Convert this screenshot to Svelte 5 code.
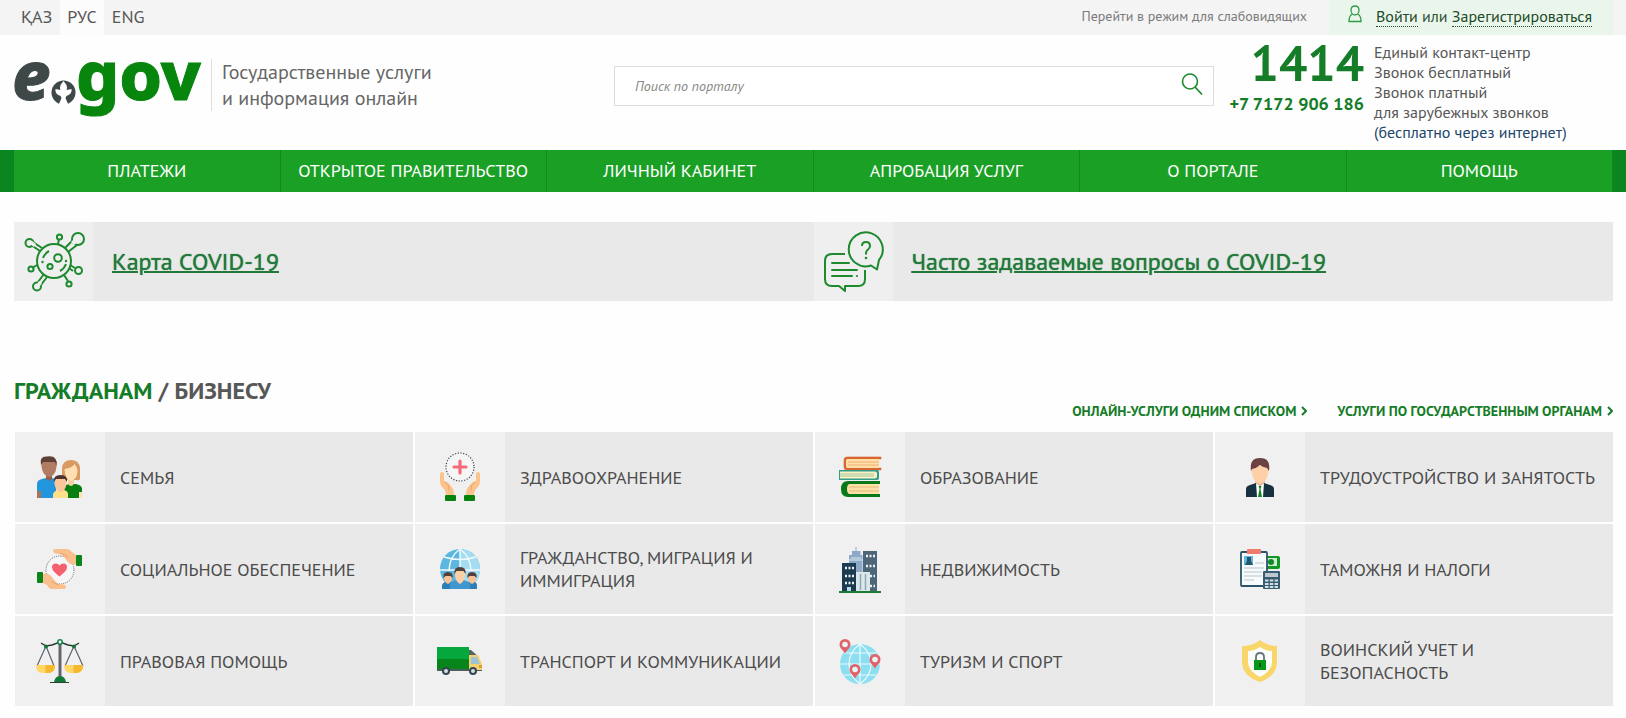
<script>
  let query = $state("");
  let lang = $state("РУС");

  const langs = ["ҚАЗ", "РУС", "ENG"];

  const menu = [
    "Платежи",
    "Открытое правительство",
    "Личный кабинет",
    "Апробация услуг",
    "О портале",
    "Помощь",
  ];

  const services = [
    { icon: "family", title: "Семья" },
    { icon: "health", title: "Здравоохранение" },
    { icon: "books", title: "Образование" },
    { icon: "worker", title: "Трудоустройство и занятость" },
    { icon: "social", title: "Социальное обеспечение" },
    { icon: "migration", title: "Гражданство, миграция и иммиграция" },
    { icon: "city", title: "Недвижимость" },
    { icon: "customs", title: "Таможня и налоги" },
    { icon: "law", title: "Правовая помощь" },
    { icon: "truck", title: "Транспорт и коммуникации" },
    { icon: "tourism", title: "Туризм и спорт" },
    { icon: "shield", title: "Воинский учет и безопасность" },
  ];
</script>

{#snippet pin(x, y)}
  <path
    transform="translate({x} {y})"
    d="M0 8.500C-2 5-5.500 3-5.500-.500a5.500 5.500 0 0 1 11 0C5.500 3 2 5 0 8.500z"
    fill="#e2626a"
  />
  <circle cx={x} cy={y - 0.5} r="2.800" fill="#e8f6f8" />
{/snippet}

{#snippet chevron()}
  <svg class="chevron" viewBox="0 0 6 10" aria-hidden="true">
    <path d="M1 1l4 4-4 4" fill="none" stroke="#1a7a2e" stroke-width="2" />
  </svg>
{/snippet}

{#snippet picture(name)}
  <svg class="picture" viewBox="0 0 48 48" aria-hidden="true">
    {#if name === "family"}
      <path d="M1 45V31q0-4 5-5l4-1h6l4 1v19z" fill="#2196dd" />
      <path d="M1 38h4v7H1z" fill="#a9745a" />
      <path d="M10 20h6v6q-3 3-6 0z" fill="#966149" />
      <path d="M5.500 8h15v6q-1 9-7.500 10Q7 23 5.500 14z" fill="#b07d63" />
      <path d="M5 12Q3 3 11 3.500 22 2 20.500 13L19 9H7z" fill="#5d4037" />
      <path d="M26 26V15q1-8 9-8t9 8v11q-1 2-4 1H28z" fill="#d99a63" />
      <path d="M27 45V35q1-3 6-4h7q5 1 6 4v10z" fill="#087d12" />
      <path d="M32 26h6v5q-3 4-6 0z" fill="#f5cfa0" />
      <path d="M28.500 16q8-1 10-5 3 3 3 8-1 8-6.500 9-6-1-6.500-12z" fill="#ffe0b2" />
      <path d="M43 39h3v6h-3z" fill="#ffe0b2" />
      <path d="M17 45v-4q1-3 5-4h6q4 1 4 4v4z" fill="#ffe08a" />
      <path d="M18.500 26h12v5q-1 7-6 8-5-1-6-8z" fill="#f9c79b" />
      <path d="M18 29q-1-7 6.500-7T31 29l-2-3h-9z" fill="#4e342e" />
    {:else if name === "health"}
      <circle cx="24" cy="14" r="14" fill="#f6f6f6" stroke="#3c4650" stroke-width="1.200" stroke-dasharray="1.200 1.550" />
      <path d="M24 8v12M18 14h12" stroke="#f56b78" stroke-width="3.200" stroke-linecap="round" />
      <path d="M4 21q0-2 2-2t2 2v7q3 0 7 5 3 3 3 9h-8q0-5-4-8-2-2-2-6z" fill="#fbc28a" />
      <path d="M44 21q0-2-2-2t-2 2v7q-3 0-7 5-3 3-3 9h8q0-5 4-8 2-2 2-6z" fill="#fbc28a" />
      <path d="M9 29q5 3 4 8M39 29q-5 3-4 8" fill="none" stroke="#e9a46c" />
      <rect x="9" y="42" width="11" height="6" rx="1" fill="#07820f" />
      <rect x="28" y="42" width="11" height="6" rx="1" fill="#07820f" />
    {:else if name === "books"}
      <path d="M45 4H11q-3 0-3 3v7q0 3 3 3h34v-2H12V6h33z" fill="#d9662f" stroke="#d9662f" stroke-width=".6" />
      <path d="M11 6h32v9H11q-1 0-1-2V8q0-2 1-2z" fill="#ffdfa8" />
      <path d="M12 9h31M12 12h31" stroke="#f3ad79" />
      <path d="M3 17h38q2 0 2 2v6q0 2-2 2H3z" fill="#2f9c8d" />
      <path d="M4 18.500h35q2 0 2 2v3q0 2-2 2H4z" fill="#fff0c4" />
      <path d="M4 21h34M4 23h34" stroke="#9fc9a1" />
      <path d="M44 28H12q-7 0-7 8t7 8h32v-3H13v-10h31z" fill="#08791a" />
      <path d="M14 31h29v10H14q-3 0-3-5t3-5z" fill="#f9e2a6" />
      <path d="M13 34h30M13 38h30" stroke="#e9b87d" />
    {:else if name === "worker"}
      <path d="M19 24h10v8l-5 5-5-5z" fill="#f2b792" />
      <path d="M15.500 13h17v5q-1 11-8.500 13-7.500-2-8.500-13z" fill="#ffd0a8" />
      <path d="M15 18Q13 5 24 5t9 13l-2-3q-5-1-7-3-3 3-8 4z" fill="#6b4142" />
      <path d="M10 44V36q0-3 4-4l6-2 4 3 4-3 6 2q4 1 4 4v8z" fill="#17303f" />
      <path d="M20 30l4 3 4-3-1 14h-6z" fill="#fff" />
      <path d="M22.500 33h3l-1 3 1.500 8h-4l1.500-8z" fill="#0b8a1a" />
    {:else if name === "social"}
      <circle cx="24" cy="25" r="14" fill="#f6f6f6" stroke="#56606a" stroke-width="1" stroke-dasharray="1 1.200" />
      <path d="M23.500 31.500C18 27 16 25 16 22q0-3.500 4-3.500 2 0 3.500 2 1.500-2 4-2 3.500 0 3.500 3.500c0 3-2 5-7.500 9.500z" fill="#f4606d" />
      <path d="M17 6q0-2 3-2h11q3 0 5 3l4 3v9q-5 2-9-3-4-6-7-7-7 0-7-3z" fill="#f9c08d" />
      <path d="M30 42q0 2-3 2H16q-3 0-5-4l-4-2v-9q5-2 9 3 4 6 7 7 7 0 7 3z" fill="#f9c08d" />
      <path d="M24 8q4 1 8 4M23 40q-4-1-8-4" fill="none" stroke="#eaa26c" />
      <rect x="40" y="10" width="6" height="11" rx="1" fill="#0b8419" />
      <rect x="1" y="27" width="6" height="11" rx="1" fill="#0b8419" />
    {:else if name === "migration"}
      <circle cx="24" cy="24" r="20" fill="#5cb7e0" />
      <path d="M24 4a20 20 0 0 1 20 20q0 11-8 17H24z" fill="#a4dcf1" />
      <path d="M24 4q-11 8-11 22M24 4q11 8 11 22M24 4v38M4 25h40M8 12q16 5 32 0" fill="none" stroke="#eff9fc" stroke-width="1.500" />
      <path d="M6 44v-4q1-3 6-4 5 1 7 4v4zM29 44v-4q2-3 7-4 5 1 5 4v4z" fill="#2c7fb8" />
      <path d="M14 44v-5q1-3 7-4h6q6 1 7 4v5z" fill="#3f97cf" />
      <path d="M8 30h8v4q-1 4-4 5-3-1-4-5zM32 30h8v4q-1 4-4 5-3-1-4-5z" fill="#f5c197" />
      <path d="M7.500 33q-1-6 4.500-6t4.500 6l-2-2h-5zM31.500 33q-1-6 4.500-6t4.500 6l-2-2h-5z" fill="#51403b" />
      <path d="M19 26h10v5q-1 6-5 8-4-2-5-8z" fill="#fccfa4" />
      <path d="M18.500 29q-1-7 5.500-7t5.500 7l-2-3h-7z" fill="#51403b" />
    {:else if name === "city"}
      <path d="M19.500 2h1v4h4v4h2v36H13V10h3V6h3.500z" fill="#8da9c7" />
      <path d="M13 15h14M15 13h10" stroke="#dce8f1" />
      <rect x="27" y="6" width="14" height="40" fill="#4c6577" />
      <path d="M30 11h9M30 21h9M34 31h5M34 41h5" stroke="#e9f2f8" stroke-width="2.500" stroke-dasharray="2 1.500" />
      <rect x="6" y="18" width="14" height="28" fill="#1d3b4f" />
      <path d="M9 23h9M9 31h9M9 38h9" stroke="#e9f2f8" stroke-width="2.500" stroke-dasharray="2 1.500" />
      <path d="M11 42h4v4h-4z" fill="#b5dcf0" />
      <rect x="20" y="27" width="14" height="19" fill="#dce7ec" />
      <path d="M24.500 29v16M29.500 29v16" stroke="#8fa6b3" stroke-width="1.500" />
      <path d="M3 46h42v2H3z" fill="#1b7a33" />
    {:else if name === "customs"}
      <path d="M29 11h13q2 0 2 2v9q0 2-2 2H29z" fill="#0f9824" />
      <path d="M30 13h11v8H30z" fill="#cdeccf" />
      <circle cx="35" cy="17" r="3" fill="#11892a" />
      <rect x="5" y="7" width="26" height="34" rx="1" fill="#f7fafb" stroke="#2c536c" stroke-width="1.800" />
      <rect x="11" y="4" width="14" height="5" rx="1" fill="#f07c6c" />
      <path d="M8 11h9v9H8z" fill="#62b8dc" />
      <path d="M11 12h4v4l2 4H9l2-4z" fill="#24556e" />
      <path d="M19 18h9M8 23h20M8 27h18M8 31h18M8 35h10" stroke="#b7c5cc" />
      <rect x="27" y="26" width="17" height="18" rx="1" fill="#385d73" />
      <path d="M29 28h13v4H29z" fill="#bec9cf" />
      <path d="M29 35.500h13M29 39h13M29 42h13" stroke="#d4e0e6" stroke-width="2" stroke-dasharray="3.500 1.300" />
    {:else if name === "law"}
      <path d="M22.500 6h3v36h-3z" fill="#66646f" />
      <path d="M5 6l5 3 6-1 8-3 8 3 6 1 5-3" fill="none" stroke="#2b3437" stroke-width="1.400" />
      <path d="M10 9L1 29M10 9l8 20M38 9l-9 20M38 9l9 20" stroke="#5d6570" stroke-width="1.200" />
      <circle cx="24" cy="5" r="2.200" fill="#fff" stroke="#11884a" stroke-width="1.600" />
      <circle cx="10" cy="9.500" r="2" fill="#11753a" />
      <circle cx="38" cy="9.500" r="2" fill="#11753a" />
      <path d="M0 28h19q0 8-7 8H7q-7 0-7-8z" fill="#ffd766" />
      <path d="M9.500 28H19q0 8-7 8H9.500z" fill="#f5b82e" />
      <path d="M28 28h19q0 8-7 8h-5q-7 0-7-8z" fill="#ffd766" />
      <path d="M37.500 28H47q0 8-7 8h-2.500z" fill="#f5b82e" />
      <path d="M18 45q1-6 6-6t6 6z" fill="#0f7a35" />
      <path d="M14 45.500h19" stroke="#2b4034" />
    {:else if name === "truck"}
      <path d="M1 10h32v12H1z" fill="#05a83c" />
      <path d="M1 22h32v10H1z" fill="#07841a" />
      <path d="M1 32h45v2H1z" fill="#48605a" />
      <path d="M33 13h2l8 7H33z" fill="#56655b" />
      <path d="M33 18h9l4 9v6H33z" fill="#f3d071" />
      <path d="M35 20h6l3 7h-9z" fill="#9cc3d6" />
      <path d="M43 28h3v3h-3z" fill="#df9a3c" />
      <circle cx="10" cy="34" r="4" fill="#34464f" />
      <circle cx="10" cy="34" r="2" fill="#d5dee2" />
      <circle cx="37" cy="34" r="4" fill="#34464f" />
      <circle cx="37" cy="34" r="2" fill="#d5dee2" />
    {:else if name === "tourism"}
      <circle cx="24" cy="27" r="20" fill="#8cdff0" />
      <path d="M24 7v40M24 7q-11 8-11 20t11 20M24 7q11 8 11 20T24 47M4 27h40M8 16h32M8 38h32" fill="none" stroke="#eefafc" stroke-width="1.200" />
      {@render pin(9, 8)}
      {@render pin(39, 23)}
      {@render pin(19, 33)}
    {:else if name === "shield"}
      <path d="M24 3q7 6 17 6v16q0 14-17 20Q6 39 6 25V9q11 0 18-6z" fill="#f8d669" />
      <path d="M24 10q6 4 12 4v11q0 9-12 15-12-6-12-15V14q6 0 12-4z" fill="#fbfdfb" />
      <path d="M20 24v-4q0-4 4-4t4 4v4" fill="none" stroke="#68747b" stroke-width="1.800" />
      <path d="M18 23h12v10H18z" fill="#079819" />
      <path d="M24 26v4" stroke="#07590f" stroke-width="2" />
    {/if}
  </svg>
{/snippet}

<div class="topbar">
  <div class="wrap topbar-inner">
    <div class="langs">
      {#each langs as item}
        <button class="lang" class:active={item === lang} onclick={() => (lang = item)}>{item}</button>
      {/each}
    </div>
    <a class="vision" href="#vision">Перейти в режим для слабовидящих</a>
    <div class="login">
      <svg class="user" viewBox="0 0 14 18" aria-hidden="true">
        <path
          d="M7 1C4.500 1 3 2.500 3 5s1.500 5 4 5 4-2.500 4-5-1.500-4-4-4zM4.500 9C2 10 1 12 1 16.500h12C13 12 12 10 9.500 9"
          fill="none"
          stroke="#2f9a45"
          stroke-width="1.300"
        />
      </svg>
      <span><a href="#login">Войти</a> или <a href="#register">Зарегистрироваться</a></span>
    </div>
  </div>
</div>

<header class="wrap header">
  <a class="brand" href="#home">
    <svg class="logo" viewBox="0 0 190 76" role="img" aria-label="e.gov">
      <text class="logo-e" x="-2" y="58">e</text>
      <text class="logo-gov" x="62" y="58">gov</text>
      <circle cx="49.500" cy="50.500" r="12" fill="#3f4848" />
      <path
        d="M49.500 39l3 4q1 3 0 5l5-1q1 5-5 7l-1 2 3 7h-10l3-7-1-2q-6-2-5-7l5 1q-1-2 0-5z"
        fill="#fff"
      />
    </svg>
    <span class="slogan">Государственные услуги<br />и информация онлайн</span>
  </a>

  <form class="search" onsubmit={(e) => e.preventDefault()}>
    <input type="search" aria-label="Поиск по порталу" placeholder="Поиск по порталу" bind:value={query} />
    <button type="submit" aria-label="Найти">
      <svg viewBox="0 0 22 24" aria-hidden="true">
        <circle cx="9" cy="9.500" r="7.500" fill="none" stroke="#1a8a2e" stroke-width="1.600" />
        <path d="M14 15l7 7.500" stroke="#1a8a2e" stroke-width="1.800" />
      </svg>
    </button>
  </form>

  <div class="phones">
    <div class="short">1414</div>
    <div class="long">+7 7172 906 186</div>
  </div>
  <div class="contacts">
    Единый контакт-центр<br />
    Звонок бесплатный<br />
    Звонок платный<br />
    для зарубежных звонков<br />
    <a href="#call">(бесплатно через интернет)</a>
  </div>
</header>

<nav class="nav">
  <div class="wrap menu">
    {#each menu as item}
      <a href="#menu">{item}</a>
    {/each}
  </div>
</nav>

<main class="wrap">
  <div class="covid">
    <div class="covid-item">
      <svg viewBox="0 0 79 79" aria-hidden="true">
        <g fill="none" stroke="#1d8a2e" stroke-width="2">
          <circle cx="40" cy="39" r="17" />
          <path d="M26 29L17 23M28 26l-9-6M51 26l8-8M54 30l9-7M33 55l-6 8M30 52l-6 8M44 22l1-5M23 43l-5 3M56 43l5 3M55 46l4 3M50 53l4 6" />
          <circle cx="15.500" cy="21" r="4" />
          <circle cx="64" cy="17" r="6" />
          <circle cx="23" cy="64.500" r="4" />
          <circle cx="45.500" cy="15" r="2.600" />
          <circle cx="17" cy="47" r="2.600" />
          <circle cx="64.500" cy="48.500" r="3.500" />
          <circle cx="55" cy="62" r="2.600" />
          <circle cx="44" cy="36" r="3.800" />
          <circle cx="36" cy="44.500" r="2.600" />
          <path d="M29 36q2-5 6-7M52 42q-2 5-6 7" />
        </g>
        <path d="M18 19l4 3-2 3-4-3zM60 17l3 4-3 2-3-3zM25 59l3 2-2 3-3-2z" fill="#efefef" />
        <circle cx="28.500" cy="40" r="1.200" fill="#1d8a2e" />
        <circle cx="52" cy="39" r="1.200" fill="#1d8a2e" />
      </svg>
      <a href="#map">Карта COVID-19</a>
    </div>
    <div class="covid-item">
      <svg viewBox="0 0 79 79" aria-hidden="true">
        <g fill="none" stroke="#1d8a2e" stroke-width="2" stroke-linejoin="round">
          <path d="M57 43.500A17 17 0 1 1 65 38l-2 9.500z" />
          <path d="M31 32H18q-7 0-7 7v18q0 7 7 7h7l6 5v-5h13q7 0 7-7V48" />
          <path d="M18 41h17M18 48h25M18 54h20" stroke-linecap="round" />
          <path d="M48 24q0-4 4-4t4 4q0 2-2 3.500T52 31v1.500" />
        </g>
        <circle cx="52" cy="36" r="1.300" fill="#1d8a2e" />
        <circle cx="43" cy="54" r="1.100" fill="#1d8a2e" />
      </svg>
      <a href="#faq">Часто задаваемые вопросы о COVID-19</a>
    </div>
  </div>

  <div class="section-head">
    <h2><a class="current" href="#citizens">Гражданам</a> / <a href="#business">Бизнесу</a></h2>
    <div class="more">
      <a href="#list">Онлайн-услуги одним списком{@render chevron()}</a>
      <a href="#organs">Услуги по государственным органам{@render chevron()}</a>
    </div>
  </div>

  <div class="services">
    {#each services as item}
      <a class="service" href="#service">
        <span class="service-icon">{@render picture(item.icon)}</span>
        <span class="service-title">{item.title}</span>
      </a>
    {/each}
  </div>
</main>

<style>
  :global(body) {
    background: #fefefe;
    color: #575757;
    font-family: "PT Sans", Roboto, "Noto Sans", sans-serif;
    font-size: 16px;
  }

  a {
    color: inherit;
    text-decoration: none;
  }

  button {
    border: 0;
    padding: 0;
    background: none;
    color: inherit;
    font: inherit;
    cursor: pointer;
  }

  .wrap {
    max-width: 1599px;
    margin: 0 auto;
    padding: 0 13px 0 14px;
  }

  .topbar {
    background: #f4f4f4;
  }

  .topbar-inner {
    display: flex;
    height: 35px;
  }

  .langs {
    display: flex;
    flex: 1;
    gap: 1px;
  }

  .lang {
    padding: 0 7px 2px;
    font-size: 18px;
  }

  .lang.active {
    background: #fcfcfc;
  }

  .vision {
    padding-right: 22px;
    color: #7b7b7b;
    font-size: 14px;
    line-height: 33px;
  }

  .login {
    box-sizing: border-box;
    display: flex;
    width: 284px;
    padding-left: 19px;
    gap: 14px;
    background: #eaf6eb;
    color: #2f5238;
    font-size: 16px;
    line-height: 33px;
  }

  .login a {
    border-bottom: 1px dotted #1d4a28;
    color: #1d4a28;
  }

  .user {
    width: 14px;
    height: 18px;
    margin-top: 5px;
  }

  .header {
    display: grid;
    grid-template-columns: 1fr 600px 150px 249px;
    padding-top: 7px;
    padding-bottom: 8px;
  }

  .brand {
    display: flex;
    align-items: flex-start;
  }

  .logo {
    width: 190px;
    height: 76px;
    overflow: visible;
  }

  .logo-e,
  .logo-gov {
    font-family: "Noto Sans", sans-serif;
    font-size: 68px;
    font-weight: 800;
  }

  .logo-e {
    fill: #3f4848;
    stroke: #3f4848;
    font-style: italic;
  }

  .logo-gov {
    fill: #07850d;
    stroke: #07850d;
  }

  .slogan {
    margin: 17px 0 0 7px;
    padding-left: 10px;
    border-left: 1px solid #dedede;
    color: #666;
    font-size: 20px;
    line-height: 26px;
  }

  .search {
    box-sizing: border-box;
    display: flex;
    height: 40px;
    margin-top: 24px;
    border: 1px solid #ddd;
    background: #fff;
  }

  .search input {
    flex: 1;
    min-width: 0;
    padding: 0 20px;
    border: 0;
    background: none;
    font: italic 14px "PT Sans", Roboto, "Noto Sans", sans-serif;
  }

  .search input::placeholder {
    color: #888;
  }

  .search button {
    width: 42px;
  }

  .search svg {
    width: 22px;
    height: 24px;
  }

  .phones {
    display: flex;
    flex-direction: column;
    align-items: flex-end;
    color: #157c28;
    font-weight: 700;
  }

  .short {
    font-size: 50px;
    line-height: 41px;
  }

  .long {
    font-size: 18px;
    line-height: 41px;
    white-space: nowrap;
  }

  .contacts {
    padding-left: 10px;
    font-size: 16px;
    line-height: 20px;
  }

  .contacts a {
    color: #22456a;
  }

  .nav {
    background: #0a8520;
  }

  .menu {
    display: grid;
    grid-template-columns: repeat(6, 1fr);
  }

  .menu a {
    border-right: 1px solid #128a1e;
    background: #1ba026;
    color: #fff;
    font-size: 18px;
    line-height: 42px;
    text-align: center;
    text-transform: uppercase;
  }

  .covid {
    display: grid;
    grid-template-columns: 1fr 1fr;
    margin-top: 30px;
    background: #e9e9e9;
  }

  .covid-item {
    display: flex;
    align-items: center;
    gap: 19px;
    color: #24793a;
    font-size: 24px;
  }

  .covid-item a {
    text-decoration: underline;
    text-decoration-thickness: 2px;
    text-shadow: 0 0 1px #24793a;
  }

  .covid-item svg {
    width: 79px;
    height: 79px;
    background: #efefef;
  }

  .section-head {
    display: flex;
    justify-content: space-between;
    align-items: flex-start;
    margin-top: 74px;
    padding-bottom: 11px;
  }

  h2 {
    margin: 0;
    font-size: 24px;
    line-height: 32px;
    text-transform: uppercase;
  }

  .current,
  .more {
    color: #157c28;
  }

  .more {
    display: flex;
    gap: 30px;
    padding-top: 26px;
    font-size: 14px;
    font-weight: 700;
    line-height: 20px;
    text-transform: uppercase;
  }

  .chevron {
    width: 6px;
    height: 10px;
    margin-left: 5px;
  }

  .services {
    display: grid;
    grid-template-columns: repeat(4, 1fr);
    gap: 2px;
    padding-left: 1px;
  }

  .service {
    display: flex;
    align-items: center;
    min-height: 90px;
    background: #e9e9e9;
    color: #4c4c4c;
    font-size: 18px;
    line-height: 23px;
    text-transform: uppercase;
  }

  .service-icon {
    display: flex;
    flex: 0 0 90px;
    align-self: stretch;
    align-items: center;
    justify-content: center;
    background: #f0f0f0;
  }

  .picture {
    width: 48px;
    height: 48px;
    overflow: visible;
  }

  .service-title {
    padding: 0 15px;
  }
</style>
